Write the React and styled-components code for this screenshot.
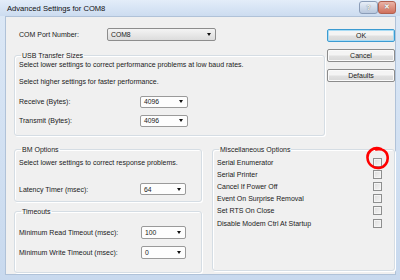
import React from 'react';
import styled, { createGlobalStyle } from 'styled-components';

const Global = createGlobalStyle`
  html, body {
    margin: 0;
    padding: 0;
    background: #d6e3f2;
  }
  body {
    font-family: "Liberation Sans", Arial, sans-serif;
    font-size: 7px;
    color: #1a1a1a;
  }
`;

const Window = styled.div`
  width: 400px;
  height: 280px;
  display: flex;
  flex-direction: column;
  background: linear-gradient(#dce8f6, #c8d9ee);
  overflow: hidden;
`;

const TitleBar = styled.div`
  height: 16px;
  display: flex;
  align-items: center;
  padding: 0 4px 0 7px;
  font-size: 7.6px;
  color: #111;
  background: linear-gradient(#e3edf9, #ccdcf0);
`;

const Title = styled.div`
  flex: 1;
`;

const CaptionButton = styled.div`
  width: ${p => p.$w}px;
  height: 11px;
  border: 1px solid ${p => (p.$close ? '#b0604f' : '#8b9db8')};
  border-radius: 3px;
  display: flex;
  align-items: center;
  justify-content: center;
  font-size: 7px;
  font-weight: bold;
  color: #fff;
  margin-top: -2px;
  background: ${p => (p.$close ? 'linear-gradient(#eab3a6, #d0705c)' : 'linear-gradient(#e8eef7, #b9c8dd)')};
  text-shadow: 0 0 1px #444;
`;

const CaptionGroup = styled.div`
  display: flex;
`;

const Client = styled.div`
  flex: 1;
  margin: 0 4px 5px 5px;
  background: #f0f0f0;
  border: 1px solid #b0c2d8;
  padding: 10px 0 0 8px;
  position: relative;
`;

const Top = styled.div`
  display: grid;
  grid-template-columns: 311px 68px;
  column-gap: 2px;
`;

const LeftTop = styled.div`
  display: flex;
  flex-direction: column;
`;

const Row = styled.div`
  display: flex;
  align-items: center;
  height: ${p => p.$h || 14}px;
  padding-left: ${p => p.$pad || 0}px;
  margin-top: ${p => p.$mt || 0}px;
`;

const Label = styled.div`
  width: ${p => p.$w}px;
  flex-shrink: 0;
`;

const Select = styled.div`
  width: ${p => p.$w}px;
  height: ${p => p.$h || 12}px;
  box-sizing: border-box;
  border: 1px solid ${p => (p.$grey ? '#8d8d8d' : '#9a9a9a')};
  border-radius: 2px;
  background: ${p => (p.$grey ? 'linear-gradient(#f4f4f4, #dcdcdc)' : '#fdfdfd')};
  display: flex;
  align-items: center;
  justify-content: space-between;
  padding: 0 4px 0 3px;
  font-size: 6.8px;
`;

const Arrow = styled.span`
  width: 0;
  height: 0;
  border-left: 2.5px solid transparent;
  border-right: 2.5px solid transparent;
  border-top: 3px solid #111;
`;

const Group = styled.fieldset`
  margin: ${p => p.$m || 0};
  border: 1px solid #d5dde4;
  border-radius: 3px;
  padding: ${p => p.$pt || 0}px 0 0 4px;
  height: ${p => p.$h}px;
  box-sizing: border-box;
  min-width: 0;
  box-shadow: inset 1px 1px 0 #fff, 1px 1px 0 #fff;
`;

const Legend = styled.legend`
  padding: 0 1px;
  margin-left: 2px;
  font-size: 7px;
`;

const Text = styled.div`
  height: ${p => p.$h || 12}px;
  display: flex;
  align-items: center;
`;

const Buttons = styled.div`
  display: flex;
  flex-direction: column;
  gap: 7px;
  padding-top: 2px;
`;

const Button = styled.div`
  height: 13px;
  box-sizing: border-box;
  border: 1px solid ${p => (p.$default ? '#3c9bd1' : '#8c8c8c')};
  border-radius: 2px;
  background: linear-gradient(#f4f4f4 45%, #e0e0e0 55%, #d8d8d8);
  display: flex;
  align-items: center;
  justify-content: center;
  font-size: 7px;
  box-shadow: ${p => (p.$default ? 'inset 0 0 0 1px #a9dcf5' : 'inset 0 0 0 1px #fafafa')};
`;

const Bottom = styled.div`
  display: grid;
  grid-template-columns: 188px 183px;
  column-gap: 10px;
  margin-top: 10px;
`;

const Stack = styled.div`
  display: flex;
  flex-direction: column;
  gap: 6px;
`;

const CheckRow = styled.div`
  height: 12.2px;
  display: flex;
  align-items: center;
  justify-content: space-between;
  padding-right: 12px;
`;

const Check = styled.span`
  width: 9px;
  height: 9px;
  box-sizing: border-box;
  border: 1px solid #8e8f8f;
  background: linear-gradient(135deg, #dcdcdc, #f6f6f6);
  box-shadow: inset 0 0 0 1px #f4f4f4;
`;

const Marker = styled.svg`
  position: absolute;
  left: 359px;
  top: 129px;
  pointer-events: none;
`;

const options = [
  'Serial Enumerator',
  'Serial Printer',
  'Cancel If Power Off',
  'Event On Surprise Removal',
  'Set RTS On Close',
  'Disable Modem Ctrl At Startup',
];

export default function App() {
  return (
    <>
      <Global />
      <Window>
        <TitleBar>
          <Title>Advanced Settings for COM8</Title>
          <CaptionGroup>
            <CaptionButton $w={17}>?</CaptionButton>
            <CaptionButton $w={16} $close>✕</CaptionButton>
          </CaptionGroup>
        </TitleBar>
        <Client>
          <Top>
            <LeftTop>
              <Row $h={14} $pad={5}>
                <Label $w={88}>COM Port Number:</Label>
                <Select $w={109} $h={13} $grey>COM8<Arrow /></Select>
              </Row>
              <Group $h={84} $m="11px 0 0 0">
                <Legend>USB Transfer Sizes</Legend>
                <Text $h={11}>Select lower settings to correct performance problems at low baud rates.</Text>
                <Text $h={22}>Select higher settings for faster performance.</Text>
                <Row $h={19}>
                  <Label $w={121}>Receive (Bytes):</Label>
                  <Select $w={48}>4096<Arrow /></Select>
                </Row>
                <Row $h={19}>
                  <Label $w={121}>Transmit (Bytes):</Label>
                  <Select $w={48}>4096<Arrow /></Select>
                </Row>
              </Group>
            </LeftTop>
            <Buttons>
              <Button $default>OK</Button>
              <Button>Cancel</Button>
              <Button>Defaults</Button>
            </Buttons>
          </Top>
          <Bottom>
            <Stack>
              <Group $h={56} $pt={3}>
                <Legend>BM Options</Legend>
                <Text $h={12}>Select lower settings to correct response problems.</Text>
                <Row $h={14} $mt={14}>
                  <Label $w={121}>Latency Timer (msec):</Label>
                  <Select $w={46}>64<Arrow /></Select>
                </Row>
              </Group>
              <Group $h={65}>
                <Legend>Timeouts</Legend>
                <Row $h={20} $mt={7}>
                  <Label $w={122}>Minimum Read Timeout (msec):</Label>
                  <Select $w={45} $h={13}>100<Arrow /></Select>
                </Row>
                <Row $h={20}>
                  <Label $w={122}>Minimum Write Timeout (msec):</Label>
                  <Select $w={45} $h={13}>0<Arrow /></Select>
                </Row>
              </Group>
            </Stack>
            <Group $h={125} $pt={3}>
              <Legend>Miscellaneous Options</Legend>
              {options.map(o => (
                <CheckRow key={o}>
                  {o}
                  <Check />
                </CheckRow>
              ))}
            </Group>
          </Bottom>
          <Marker width="26" height="25" viewBox="0 0 26 25">
            <path d="M16 3 C8 0 2 6 2.5 12 C3 19 9 22.5 14 22 C20 21.5 23.5 16 22.5 10 C21.5 5 17 2.5 11 3.5" fill="none" stroke="#f00" strokeWidth="2.6" strokeLinecap="round" />
          </Marker>
        </Client>
      </Window>
    </>
  );
}
